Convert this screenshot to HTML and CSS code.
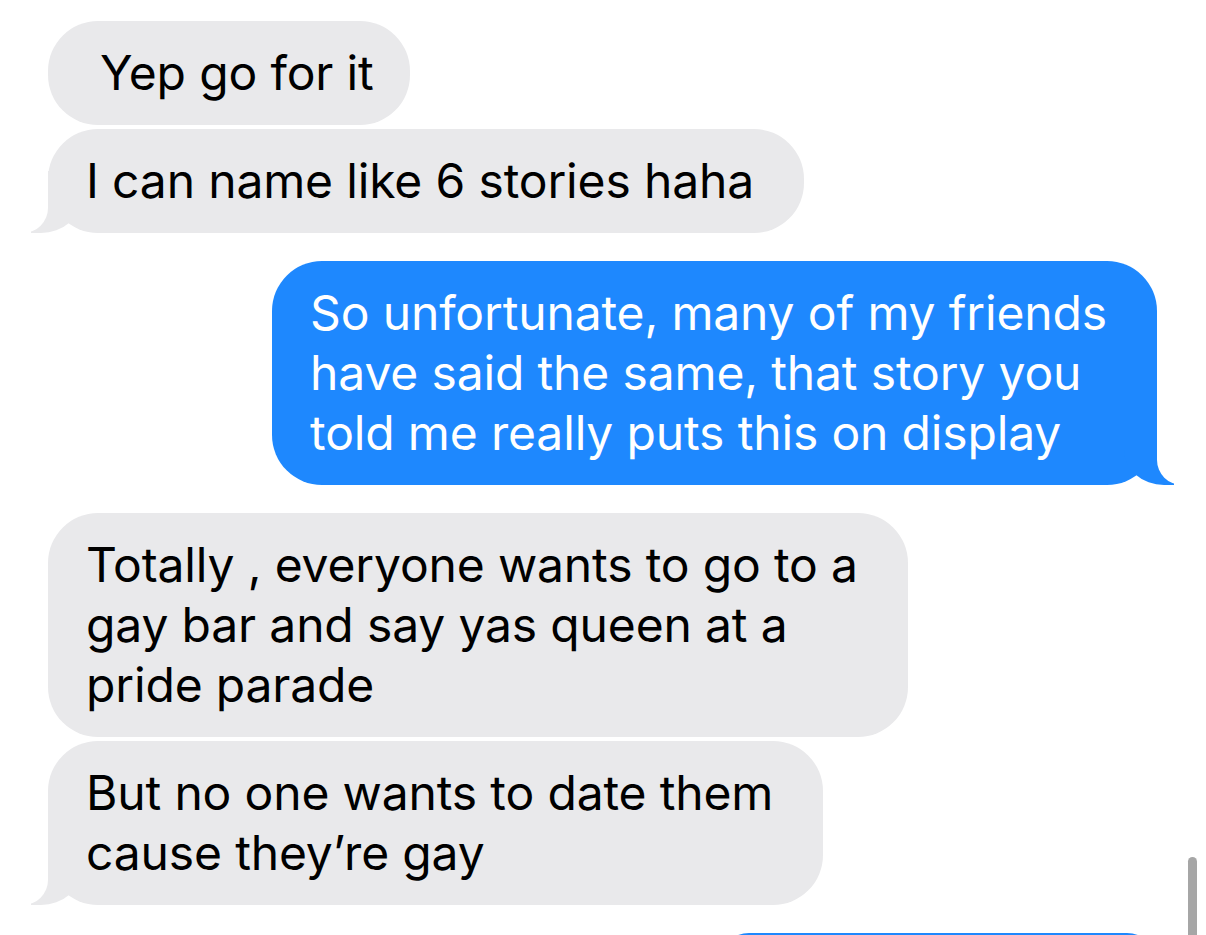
FILE: index.html
```html
<!DOCTYPE html>
<html lang="en">
<head>
  <meta charset="UTF-8" />
  <title>Messages</title>
  <link rel="stylesheet" href="styles.css">
</head>
<body>
  <div class="chat">
    <div class="bubble them first">Yep go for it</div>
    <div class="bubble them tail">I can name like 6 stories haha</div>
    <div class="bubble me tail">So unfortunate, many of my friends<br>have said the same, that story you<br>told me really puts this on display</div>
    <div class="bubble them">Totally , everyone wants to go to a<br>gay bar and say yas queen at a<br>pride parade</div>
    <div class="bubble them tail">But no one wants to date them<br>cause they’re gay</div>
    <div class="bubble me peek"></div>
  </div>

  <!-- scroll indicator -->
  <div class="scroll-thumb"></div>
</body>
</html>
```

FILE: styles.css
```css
html, body {
  margin: 0;
  height: 100%;
  overflow: hidden;
  background: #ffffff;
}

body {
  font-family: Inter, "Noto Sans", sans-serif;
  font-size: 48px;
  line-height: 60px;
  letter-spacing: -0.15px;
  position: relative;
}

.chat {
  display: flex;
  flex-direction: column;
  padding: 21px 49px 0 48px;
}

.bubble {
  position: relative;
  padding: 22px 50px 22px 38px;
  border-radius: 50px;
  white-space: nowrap;
}

.bubble + .bubble {
  margin-top: 28px;
}

.them + .them {
  margin-top: 4px;
}

.them {
  align-self: flex-start;
  background: #e9e9eb;
  color: #000;
}

.me {
  align-self: flex-end;
  background: #1e88fe;
  color: #fff;
}

.first {
  padding-left: 52px;
  padding-right: 36px;
}

.peek {
  width: 438px;
  height: 60px;
  padding: 0;
}

/* bubble tails */
.tail::before,
.tail::after {
  content: "";
  position: absolute;
  bottom: 0;
  height: 62px;
}

.them.tail::before {
  left: -17px;
  width: 50px;
  background: #e9e9eb;
  border-bottom-right-radius: 40px 35px;
}

.them.tail::after {
  left: -40px;
  width: 40px;
  background: #ffffff;
  border-bottom-right-radius: 25px;
}

.me.tail::before {
  right: -17px;
  width: 50px;
  background: #1e88fe;
  border-bottom-left-radius: 40px 35px;
}

.me.tail::after {
  right: -40px;
  width: 40px;
  background: #ffffff;
  border-bottom-left-radius: 25px;
}

.scroll-thumb {
  position: absolute;
  top: 857px;
  left: 1188px;
  width: 9px;
  height: 90px;
  border-radius: 5px;
  background: #a6a6a6;
}
```
